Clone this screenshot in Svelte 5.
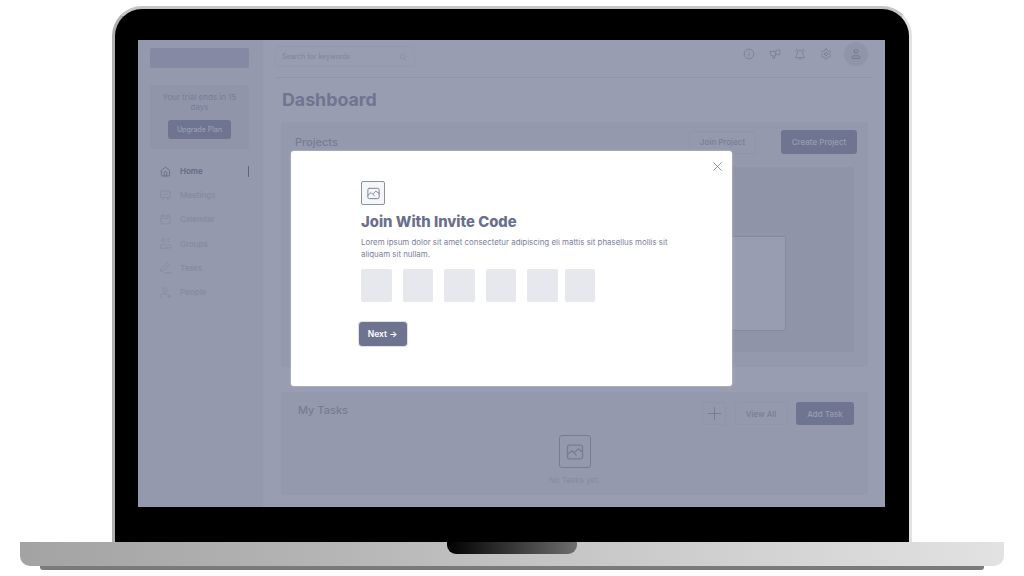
<script>
  const nav = [
    { label: 'Home', icon: 'M3 6.500 8 2.500l5 4v6a1 1 0 0 1-1 1H4a1 1 0 0 1-1-1zM6.500 13.500v-4a1.500 1.500 0 0 1 3 0v4', active: true },
    { label: 'Meetings', icon: 'M2.500 2.500h11v8h-11zM5.500 10.500l-1 3.500M10.500 10.500l1 3.500M5.500 8l2-2 1.500 1L11 5' },
    { label: 'Calendar', icon: 'M3.500 3.500h9a1 1 0 0 1 1 1v8a1 1 0 0 1-1 1h-9a1 1 0 0 1-1-1v-8a1 1 0 0 1 1-1zM5 2v3M11 2v3M5 6.500h6' },
    { label: 'Groups', icon: 'M3.500 4a2 2 0 1 0 4 0 2 2 0 1 0-4 0M10.500 2.500a1.800 1.800 0 1 1 0 3.500M1.500 13.500v-1.500a3 3 0 0 1 3-3h2a3 3 0 0 1 3 3v1.500zM11.500 9a3 3 0 0 1 3 3v1.500h-2.500' },
    { label: 'Tasks', icon: 'M2 12l1-3 7-7 2.500 2.500-7 7zM7 14.500h8' },
    { label: 'People', icon: 'M5 4.500a2.500 2.500 0 1 0 5 0 2.500 2.500 0 1 0-5 0M2 14v-1.500a3 3 0 0 1 3-3h5M12.500 10.500v4M10.500 12.500h4' }
  ];

  const tools = [
    'M1.500 8a6.500 6.500 0 1 0 13 0 6.500 6.500 0 1 0-13 0M8 7.500V11M8 5v.500',
    'M2 4.500h7l3.500-2.500a1.500 1.500 0 0 1 2 1.500v4a1.500 1.500 0 0 1-2 1.500L9 7.500V10H7.500v3.500H5V10H3a1 1 0 0 1-1-1zM9 4.500v3',
    'M2 12.500c1.500-1.500 2-3 2-5.500a4 4 0 0 1 8 0c0 2.500.5 4 2 5.500zM6.500 14.500h3M2 4l2-2.500M14 4l-2-2.500'
  ];

  const gear = 'M12.220 2h-.44a2 2 0 0 0-2 2v.18a2 2 0 0 1-1 1.730l-.43.25a2 2 0 0 1-2 0l-.15-.08a2 2 0 0 0-2.730.73l-.22.38a2 2 0 0 0 .73 2.730l.15.1a2 2 0 0 1 1 1.720v.51a2 2 0 0 1-1 1.740l-.15.09a2 2 0 0 0-.73 2.730l.22.38a2 2 0 0 0 2.730.73l.15-.08a2 2 0 0 1 2 0l.43.25a2 2 0 0 1 1 1.730V20a2 2 0 0 0 2 2h.44a2 2 0 0 0 2-2v-.18a2 2 0 0 1 1-1.730l.43-.25a2 2 0 0 1 2 0l.15.08a2 2 0 0 0 2.730-.73l.22-.39a2 2 0 0 0-.73-2.730l-.15-.08a2 2 0 0 1-1-1.740v-.5a2 2 0 0 1 1-1.740l.15-.09a2 2 0 0 0 .73-2.730l-.22-.38a2 2 0 0 0-2.730-.73l-.15.08a2 2 0 0 1-2 0l-.43-.25a2 2 0 0 1-1-1.730V4a2 2 0 0 0-2-2zM9 12a3 3 0 1 0 6 0 3 3 0 1 0-6 0';

  const codeBoxes = [1, 2, 3, 4, 5, 6];
  const picture = 'M3.500 2.500h9a1.500 1.500 0 0 1 1.500 1.500v8a1.500 1.500 0 0 1-1.500 1.500h-9A1.500 1.500 0 0 1 2 12V4a1.500 1.500 0 0 1 1.500-1.500zM2 10l3.500-3 3.500 3.500M8 8l2.500-2.500L14 8';
</script>

<div class="page">
  <div class="lid">
    <div class="screen">
      <aside class="sidebar">
        <div class="logo"></div>
        <div class="trial">
          <p>Your trial ends in 15 days</p>
          <button class="solid upgrade">Upgrade Plan</button>
        </div>
        <nav>
          {#each nav as item}
            <div class="row" class:active={item.active}>
              <svg viewBox="0 0 16 16" width="13" height="13"><path d={item.icon} /></svg>
              <span>{item.label}</span>
              {#if item.active}<i class="marker"></i>{/if}
            </div>
          {/each}
        </nav>
      </aside>

      <main>
        <header>
          <div class="search">
            <span>Search for keywords</span>
            <svg viewBox="0 0 16 16" width="8" height="8"><path d="M2 7a5 5 0 1 0 10 0 5 5 0 1 0-10 0M11 11l3.500 3.500" /></svg>
          </div>
          <div class="tools">
            {#each tools as path}
              <svg viewBox="0 0 16 16" width="12" height="12"><path d={path} /></svg>
            {/each}
            <svg class="gear" viewBox="0 0 24 24" width="12" height="12"><path d={gear} /></svg>
            <div class="avatar">
              <svg viewBox="0 0 16 16" width="12" height="12"><path d="M5.500 4.500a2.500 2.500 0 1 0 5 0 2.500 2.500 0 1 0-5 0M3 13.500a2 2 0 0 1 2-3h6a2 2 0 0 1 2 3z" /></svg>
            </div>
          </div>
        </header>

        <h1>Dashboard</h1>

        <section class="projects">
          <div class="head">
            <h2>Projects</h2>
            <button class="outline join">Join Project</button>
            <button class="solid create">Create Project</button>
          </div>
          <div class="inner"><div class="card"></div></div>
        </section>

        <section class="tasks">
          <div class="head">
            <h2>My Tasks</h2>
            <button class="outline plus" aria-label="Add">
              <svg viewBox="0 0 16 16" width="15" height="15"><path d="M8 1.500v13M1.500 8h13" /></svg>
            </button>
            <button class="outline viewall">View All</button>
            <button class="solid addtask">Add Task</button>
          </div>
          <div class="empty">
            <div class="emptyicon">
              <svg viewBox="0 0 16 16" width="20" height="20"><path d={picture} /></svg>
            </div>
            <span>No Tasks yet.</span>
          </div>
        </section>
      </main>

      <div class="modal">
        <svg class="close" viewBox="0 0 16 16" width="11" height="11"><path d="M2.500 2.500l11 11M13.500 2.500l-11 11" /></svg>
        <div class="modalicon">
          <svg viewBox="0 0 16 16" width="15" height="15"><path d={picture} /></svg>
        </div>
        <h3>Join With Invite Code</h3>
        <p>Lorem ipsum dolor sit amet consectetur adipiscing eli mattis sit phasellus mollis sit aliquam sit nullam.</p>
        <div class="code">
          {#each codeBoxes as box}
            <div class="box"></div>
          {/each}
        </div>
        <button class="next">Next →</button>
      </div>
    </div>
  </div>

  <div class="base"><div class="notch"></div></div>
  <div class="foot"></div>
</div>

<style>
  :global(body) {
    margin: 0;
    background: #fff;
  }

  .page {
    width: 1024px;
    height: 576px;
    overflow: hidden;
    padding-top: 6px;
    box-sizing: border-box;
    display: flex;
    flex-direction: column;
    align-items: center;
    font-family: Inter, "Liberation Sans", sans-serif;
  }

  .lid {
    width: 800px;
    height: 536px;
    box-sizing: border-box;
    padding: 31px 24px 0 23px;
    background: #000;
    border: 3px solid;
    border-color: #c4c4c4 #e2e2e2 #000 #b0b0b0;
    border-bottom: 0;
    border-radius: 30px 30px 0 0;
  }

  .screen {
    position: relative;
    width: 747px;
    height: 467px;
    display: grid;
    grid-template-columns: 125px 1fr;
    background: #989db1;
    overflow: hidden;
  }

  svg path {
    fill: none;
    stroke: currentColor;
    stroke-width: 1;
    stroke-linecap: round;
    stroke-linejoin: round;
  }

  svg.gear path {
    stroke-width: 1.500;
  }

  p, h1, h2, h3 {
    margin: 0;
  }

  button {
    font-family: inherit;
    padding: 0;
    box-sizing: border-box;
    border-radius: 3px;
    font-size: 8px;
    font-weight: 500;
  }

  .solid {
    background: #6f7590;
    border: 0;
    color: #989db1;
  }

  .outline {
    background: transparent;
    border: 1px solid #9095aa;
    color: #797e98;
  }

  .sidebar {
    background: #9499ad;
    padding: 8px 14px 0 12px;
  }

  .logo {
    height: 20px;
    background: #8589a4;
    border-radius: 2px;
  }

  .trial {
    margin-top: 17px;
    height: 64px;
    box-sizing: border-box;
    padding-top: 7px;
    background: #9095aa;
    border-radius: 3px;
    text-align: center;
  }

  .trial p {
    font-size: 8px;
    line-height: 10px;
    padding: 0 10px;
    color: #787d97;
  }

  .upgrade {
    margin-top: 8px;
    width: 63px;
    height: 19px;
    font-size: 7px;
  }

  nav {
    margin-top: 10px;
  }

  .row {
    height: 24.200px;
    display: flex;
    align-items: center;
    gap: 8px;
    padding-left: 9px;
    font-size: 8px;
    font-weight: 500;
    color: #858aa3;
  }

  .row.active {
    color: #636985;
    font-weight: 600;
  }

  .marker {
    margin-left: auto;
    width: 1px;
    height: 11px;
    background: #5f6583;
  }

  main {
    padding: 0 12px;
    min-width: 0;
  }

  header {
    height: 38px;
    box-sizing: border-box;
    border-bottom: 1px solid #9095aa;
    display: flex;
    justify-content: space-between;
    align-items: flex-start;
  }

  .search {
    margin-top: 6px;
    width: 140px;
    height: 21px;
    box-sizing: border-box;
    padding: 0 7px 0 6px;
    border: 1px solid #9499ad;
    border-radius: 4px;
    display: flex;
    align-items: center;
    justify-content: space-between;
    font-size: 7px;
    color: #7f849d;
  }

  .tools {
    margin: 2px 5px 0 0;
    display: flex;
    align-items: center;
    gap: 13.500px;
    color: #747a95;
  }

  .avatar {
    margin-left: -1px;
    width: 24px;
    height: 24px;
    border-radius: 50%;
    background: #9095aa;
    display: flex;
    align-items: center;
    justify-content: center;
    color: #6a7089;
  }

  h1 {
    margin: 11px 0 0 7px;
    height: 22px;
    font-size: 17.800px;
    line-height: 22px;
    font-weight: 700;
    color: #6f7590;
  }

  section {
    margin: 0 5px 0 6px;
    background: #9499ad;
    border-radius: 3px;
    box-sizing: border-box;
  }

  h2 {
    font-size: 11px;
    font-weight: 500;
    color: #767c96;
    margin-right: auto;
  }

  .head {
    display: flex;
    align-items: center;
  }

  .projects {
    margin-top: 11px;
    height: 245px;
    padding: 8px 11px 0 14px;
  }

  .projects .head {
    height: 24px;
  }

  .join {
    width: 67px;
    height: 23px;
    margin-right: 25px;
  }

  .create {
    width: 76px;
    height: 24px;
  }

  .inner {
    margin: 13px 3px 0 0;
    height: 185px;
    background: #8f94a9;
    border-radius: 2px;
    padding: 69px 0 0 68px;
    box-sizing: border-box;
  }

  .card {
    width: 423px;
    height: 95px;
    box-sizing: border-box;
    background: #989db1;
    border: 1px solid #858aa2;
    border-radius: 2px;
  }

  .tasks {
    margin-top: 25px;
    height: 103px;
    padding: 10px 14px 0 17px;
  }

  .tasks .head {
    height: 23px;
    gap: 8.500px;
  }

  .tasks h2 {
    position: relative;
    top: -4px;
  }

  .plus {
    width: 24px;
    height: 23px;
    display: flex;
    align-items: center;
    justify-content: center;
    color: #767c96;
  }

  .viewall {
    width: 53px;
    height: 23px;
  }

  .addtask {
    width: 58px;
    height: 23px;
  }

  .empty {
    margin: 10px 0 0 -3px;
    display: flex;
    flex-direction: column;
    align-items: center;
    gap: 7px;
    font-size: 8px;
    color: #858aa3;
  }

  .emptyicon {
    width: 32px;
    height: 33px;
    box-sizing: border-box;
    border: 1px solid #767c96;
    border-radius: 3px;
    display: flex;
    align-items: center;
    justify-content: center;
    color: #767c96;
  }

  .modal {
    position: absolute;
    left: 153px;
    top: 111px;
    width: 441px;
    height: 235px;
    box-sizing: border-box;
    padding: 30px 0 0 70px;
    background: #fff;
    border-radius: 3px;
    box-shadow: 0 0 2px rgba(255, 255, 255, 0.6);
  }

  .close {
    position: absolute;
    top: 10px;
    right: 9px;
    color: #5f6583;
  }

  .modalicon {
    width: 24px;
    height: 24px;
    box-sizing: border-box;
    background: #f5f6f9;
    border: 1px solid #8c91a9;
    border-radius: 2px;
    display: flex;
    align-items: center;
    justify-content: center;
    color: #7b8099;
  }

  h3 {
    margin-top: 8px;
    font-size: 14.800px;
    line-height: 18px;
    font-weight: 800;
    color: #6a708c;
  }

  .modal p {
    margin-top: 5px;
    width: 320px;
    font-size: 7.900px;
    line-height: 12px;
    color: #7b8099;
  }

  .code {
    margin-top: 9px;
    display: flex;
    gap: 11px;
  }

  .box {
    width: 30.500px;
    height: 33px;
    background: #e7e8ed;
    border-radius: 2px;
  }

  .box:last-child {
    margin-left: -4px;
  }

  .next {
    margin: 19px 0 0 -3.500px;
    width: 50px;
    height: 26px;
    background: #6e7490;
    border: 1px solid #dfe1e8;
    border-radius: 4px;
    color: #fff;
    font-size: 8.500px;
    font-weight: 600;
  }

  .base {
    flex: none;
    position: relative;
    width: 984px;
    height: 24px;
    background: linear-gradient(90deg, #a3a3a3, #b4b4b4 30%, #c9c9c9 60%, #e2e2e2);
    border-radius: 0 0 10px 10px;
  }

  .notch {
    width: 130px;
    height: 12px;
    margin: 0 auto;
    background: linear-gradient(90deg, #000, #6e6e6e);
    border-radius: 0 0 9px 9px;
  }

  .foot {
    flex: none;
    width: 944px;
    height: 4px;
    background: #7a7a7a;
    border-radius: 0 0 3px 3px;
  }
</style>
